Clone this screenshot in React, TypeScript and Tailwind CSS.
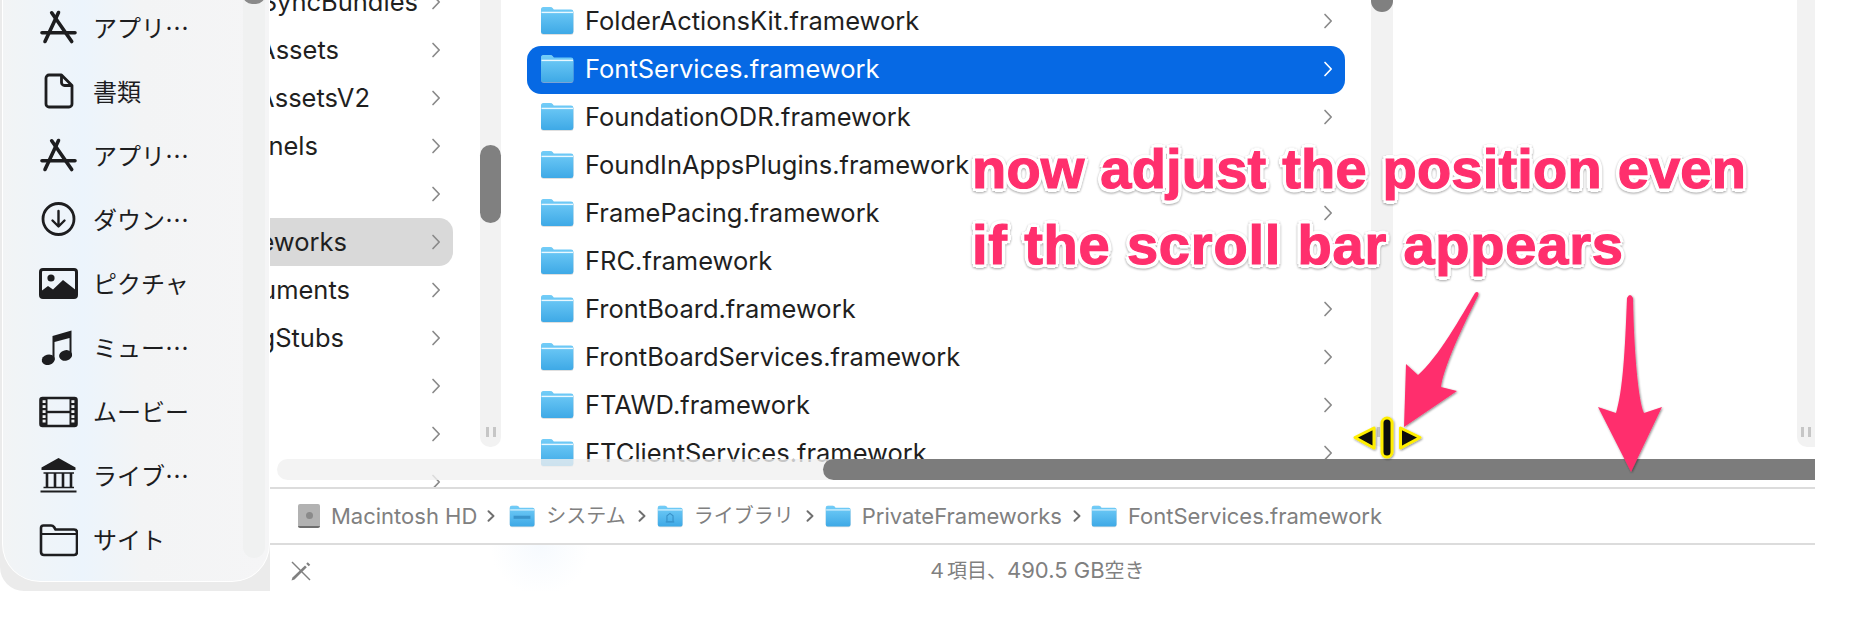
import React from "react";

const FONT = "font-[Inter,'Noto_Sans_CJK_JP',sans-serif]";

function Chevron({ className = "stroke-[#8a8a8a]" }: { className?: string }) {
  return (
    <svg width="10" height="16" viewBox="0 0 10 16" fill="none" className={`shrink-0 ${className}`}>
      <path d="M2 1.5 L8.2 8 L2 14.5" strokeWidth="1.7" strokeLinecap="round" strokeLinejoin="round" />
    </svg>
  );
}

function Folder({ size = 34, mark }: { size?: number; mark?: "macos" | "lib" }) {
  const h = Math.round((size * 30) / 34);
  return (
    <svg width={size} height={h} viewBox="0 0 34 30" className="shrink-0">
      <defs>
        <linearGradient id="fb" x1="0" y1="0" x2="0" y2="1">
          <stop offset="0" stopColor="#73cdf8" />
          <stop offset="1" stopColor="#3ea9e6" />
        </linearGradient>
      </defs>
      <path d="M1 26 V4 Q1 1 4 1 H10 Q12 1 13 2.5 L14 4 H31 Q33.5 4 33.5 7 V26 Q33.5 29 31 29 H4 Q1 29 1 26 Z" fill="#c9c9c9" opacity="0.6" />
      <path d="M1 25.5 V3.5 Q1 1 3.5 1 H10 Q12 1 12.8 2.3 L13.6 3.6 H31 Q33.4 3.6 33.4 6 V25.5 Q33.4 28 31 28 H3.5 Q1 28 1 25.5 Z" fill="url(#fb)" />
      <path d="M1.5 6.4 H33" stroke="#e9f8ff" strokeWidth="1.4" />
      {mark === "macos" && <rect x="6" y="14" width="22" height="4" fill="#2a7fb8" opacity="0.65" />}
      {mark === "lib" && <path d="M13 21 V14 L17 11 L21 14 V21 M11.5 22 H22.5" stroke="#2a7fb8" strokeWidth="1.4" fill="none" opacity="0.7" />}
    </svg>
  );
}

const ink = "#1d1d1f";

const icons: Record<string, React.ReactNode> = {
  app: (
    <g stroke={ink} strokeWidth="3.6" strokeLinecap="round" fill="none">
      <path d="M20.5 5.5 L7 34.5" />
      <path d="M13.7 5.8 L33.7 34.5" />
      <path d="M4 25.7 H37" />
    </g>
  ),
  doc: (
    <g stroke={ink} strokeWidth="2.8" fill="none" strokeLinejoin="round">
      <path d="M11 4 H23.5 L34 14.5 V33 a3 3 0 0 1 -3 3 H11 a3 3 0 0 1 -3 -3 V7 a3 3 0 0 1 3 -3 Z" />
      <path d="M23.5 4 V11.5 a3 3 0 0 0 3 3 H34" />
    </g>
  ),
  down: (
    <g stroke={ink} fill="none" strokeLinecap="round" strokeLinejoin="round">
      <circle cx="20.5" cy="20" r="15.5" strokeWidth="2.8" />
      <path d="M20.5 12 V27 M14.5 21.5 L20.5 27.5 L26.5 21.5" strokeWidth="2.4" />
    </g>
  ),
  pic: (
    <g>
      <rect x="2.5" y="6.5" width="36" height="28" rx="2.5" fill="none" stroke={ink} strokeWidth="3" />
      <circle cx="13" cy="15" r="3.6" fill={ink} />
      <path d="M2 34 V29 L10 23 L15 26.5 L25 17 L39 28 V34 Z" fill={ink} />
    </g>
  ),
  music: (
    <g fill={ink}>
      <ellipse cx="10.3" cy="32.7" rx="6.6" ry="5.2" transform="rotate(-15 10.3 32.7)" />
      <ellipse cx="27.6" cy="28.4" rx="6.6" ry="5.2" transform="rotate(-15 27.6 28.4)" />
      <path d="M14.5 33 V9 L33.5 3.5 V29 H31.5 V11 L16.5 15 V33 Z" />
    </g>
  ),
  film: (
    <g>
      <rect x="2.5" y="7" width="36" height="28" rx="2" fill="none" stroke={ink} strokeWidth="2.6" />
      <rect x="2.5" y="7" width="7" height="28" fill={ink} />
      <rect x="31.5" y="7" width="7" height="28" fill={ink} />
      <path d="M9 21 H32" stroke={ink} strokeWidth="2.4" />
      {[10.5, 15.5, 20.5, 25.5, 30].map((y) => (
        <g key={y} fill="#f2f4f6">
          <rect x="4.6" y={y - 1.3} width="3" height="2.8" />
          <rect x="33.4" y={y - 1.3} width="3" height="2.8" />
        </g>
      ))}
    </g>
  ),
  lib: (
    <g>
      <path d="M20.5 3 L37.5 12.5 V15 H3.5 V12.5 Z" fill={ink} />
      <path d="M9 18 V32 M17 18 V32 M25 18 V32 M33 18 V32" stroke={ink} strokeWidth="2.6" />
      <path d="M5.5 18 H36 M5.5 32.5 H36" stroke={ink} strokeWidth="1.4" />
      <path d="M2.5 36.5 H38.5" stroke={ink} strokeWidth="2" />
    </g>
  ),
  site: (
    <g stroke={ink} fill="none" strokeLinejoin="round">
      <path d="M3 33 V9 Q3 6.5 5.5 6.5 H13 Q15 6.5 16 8 L17.5 10.5 H36 Q39 10.5 39 13.5 V33 Q39 36 36 36 H6 Q3 36 3 33 Z" strokeWidth="2.6" />
      <path d="M3 15 H39" strokeWidth="1.8" />
    </g>
  ),
};

const sideRows: [string, string][] = [
  ["app", "アプリ…"],
  ["doc", "書類"],
  ["app", "アプリ…"],
  ["down", "ダウン…"],
  ["pic", "ピクチャ"],
  ["music", "ミュー…"],
  ["film", "ムービー"],
  ["lib", "ライブ…"],
  ["site", "サイト"],
];

const col1: { t: string; w: string; sel?: boolean }[] = [
  { t: "SyncBundles", w: "w-[13px]" },
  { t: "Assets", w: "w-[92px]" },
  { t: "AssetsV2", w: "w-[61px]" },
  { t: "Panels", w: "w-[113px]" },
  { t: "", w: "w-[48px]" },
  { t: "PrivateFrameworks", w: "w-[84px]", sel: true },
  { t: "Documents", w: "w-[81px]" },
  { t: "TracingStubs", w: "w-[87px]" },
  { t: "", w: "w-[48px]" },
  { t: "", w: "w-[48px]" },
  { t: "", w: "w-[48px]" },
];

const col2 = [
  "FolderActionsKit.framework",
  "FontServices.framework",
  "FoundationODR.framework",
  "FoundInAppsPlugins.framework",
  "FramePacing.framework",
  "FRC.framework",
  "FrontBoard.framework",
  "FrontBoardServices.framework",
  "FTAWD.framework",
  "FTClientServices.framework",
];

function Grip() {
  return (
    <div className="mt-auto mb-[10px] flex justify-center gap-[4px]">
      <div className="h-[10px] w-[3px] bg-[#c6c6c6]" />
      <div className="h-[10px] w-[3px] bg-[#c6c6c6]" />
    </div>
  );
}

function Crumb({ icon, text, latin }: { icon: React.ReactNode; text: string; latin?: boolean }) {
  return (
    <>
      {icon}
      <span className={`ml-[11px] whitespace-nowrap ${latin ? "text-[22px]" : "text-[20px]"}`}>{text}</span>
    </>
  );
}

function CrumbSep({ className }: { className: string }) {
  return (
    <svg width="8" height="12" viewBox="0 0 8 12" fill="none" className={`shrink-0 ${className}`}>
      <path d="M1.5 1.2 L6.5 6 L1.5 10.8" stroke="#6f6f6f" strokeWidth="1.9" strokeLinecap="round" strokeLinejoin="round" />
    </svg>
  );
}

export default function App() {
  return (
    <div className={`relative flex h-[632px] w-[1856px] overflow-hidden bg-white ${FONT}`}>
      {/* floating sidebar */}
      <aside className="h-[591px] w-[270px] shrink-0 rounded-bl-[24px] bg-[#ebebeb]">
        <div className="ml-[2px] flex h-[582px] w-[268px] overflow-hidden rounded-b-[38px] border-x border-b border-white bg-[linear-gradient(90deg,#f2f4f5_0%,#ecf4fc_30%,#f3f4f5_52%,#f5f5f6_100%)]">
          <div className="-mt-[5px] w-[240px] shrink-0">
            {sideRows.map(([ic, label], i) => (
              <div key={i} className="flex h-[64px] items-center gap-[15px] pl-[35px] font-['Noto_Sans_CJK_JP',sans-serif] text-[24px] text-[#1d1d1f]">
                <svg width="40" height="40" viewBox="0 0 40 40" className="shrink-0">
                  {icons[ic]}
                </svg>
                <span className="whitespace-nowrap">{label}</span>
              </div>
            ))}
          </div>
          <div className="h-[558px] w-[22px] shrink-0 rounded-b-[11px] bg-[#f0f1f1]">
            <div className="-mt-[14px] h-[18px] w-full rounded-full bg-[#8a8a8a]" />
          </div>
        </div>
      </aside>

      {/* finder window */}
      <main className="w-[1545px] shrink-0">
        <div className="relative flex h-[487px] overflow-hidden text-[25.5px] text-[#1f1f1f]">
          {/* column 1 */}
          <div className="-mt-[22px] w-[210px] shrink-0 pr-[27px]">
            {col1.map((r, i) => (
              <div
                key={i}
                className={`flex h-[48px] items-center justify-end rounded-r-[14px] pr-[12px] ${r.sel ? "bg-[#d9d9d9]" : ""}`}
              >
                <div className="flex min-w-0 flex-1 justify-end overflow-hidden whitespace-nowrap">
                  <span className="shrink-0">{r.t}</span>
                </div>
                <div className={`${r.w} shrink-0`} />
                <Chevron />
              </div>
            ))}
          </div>
          <div className="flex h-[447px] w-[21px] shrink-0 flex-col rounded-b-[10px] bg-[#f2f2f2]">
            <div className="mt-[145px] h-[78px] w-full rounded-full bg-[#808080]" />
            <Grip />
          </div>

          {/* column 2 */}
          <div className="-mt-[2px] w-[870px] shrink-0 px-[26px]">
            {col2.map((name) => {
              const sel = name.startsWith("FontServices");
              return (
                <div
                  key={name}
                  className={`flex h-[48px] items-center rounded-[14px] pb-[2px] pl-[13px] pr-[12px] ${sel ? "bg-[#0669e4] text-white" : ""}`}
                >
                  <Folder />
                  <span className="ml-[11px] whitespace-nowrap">{name}</span>
                  <div className="flex-1" />
                  <Chevron className={sel ? "stroke-white" : "stroke-[#8a8a8a]"} />
                </div>
              );
            })}
          </div>
          <div className="flex h-[447px] w-[22px] shrink-0 flex-col rounded-b-[10px] bg-[#f2f2f2]">
            <div className="h-[12px] w-full rounded-b-full bg-[#808080]" />
            <Grip />
          </div>

          {/* column 3 */}
          <div className="w-[404px] shrink-0" />
          <div className="flex h-[447px] w-[18px] shrink-0 flex-col rounded-bl-[10px] bg-[#f2f2f2]">
            <Grip />
          </div>

          {/* horizontal scroller, over the columns */}
          <div className="absolute left-[7px] right-0 top-[459px] flex h-[21px] justify-end rounded-full bg-[#f0f0f0]/80">
            <div className="h-full w-[992px] rounded-l-full rounded-r-[8px] bg-[#7c7c7c]" />
          </div>
        </div>

        {/* path bar */}
        <div className="flex h-[58px] items-center border-y-2 border-[#dcdcdc] pl-[28px] text-[#808080]">
          <Crumb
            icon={
              <div className="flex h-[24px] w-[22px] shrink-0 items-center justify-center rounded-[2px] border-b-2 border-[#6e6e6e] bg-[#b2b2b2]">
                <div className="h-[7px] w-[7px] rounded-full bg-[#8a8a8a]" />
              </div>
            }
            text="Macintosh HD"
            latin
          />
          <CrumbSep className="ml-[10px] mr-[14px]" />
          <Crumb icon={<Folder size={26} mark="macos" />} text="システム" />
          <CrumbSep className="ml-[12px] mr-[11px]" />
          <Crumb icon={<Folder size={26} mark="lib" />} text="ライブラリ" />
          <CrumbSep className="ml-[12px] mr-[11px]" />
          <Crumb icon={<Folder size={26} />} text="PrivateFrameworks" latin />
          <CrumbSep className="ml-[11px] mr-[10px]" />
          <Crumb icon={<Folder size={26} />} text="FontServices.framework" latin />
        </div>

        {/* status bar */}
        <div className="flex h-[46px] items-center bg-[radial-gradient(circle_at_270px_0px,#f6fafe_0px,#ffffff_50px)] pl-[20px] pt-[5px] text-[20px] text-[#808080]">
          <svg width="22" height="22" viewBox="0 0 22 22" fill="none" className="shrink-0">
            <path d="M2 2 L20 20" stroke="#808080" strokeWidth="1.5" />
            <path d="M1.5 20.5 L2.5 17.5 L15 5.5 L16.8 7.3 L4.5 19.5 Z" fill="#808080" />
            <path d="M17 3 L19.5 5.5" stroke="#808080" strokeWidth="2.2" />
          </svg>
          <span className="ml-[615px] whitespace-nowrap">
            ４項目、<span className="text-[22px]">490.5 GB</span>
            空き
          </span>
        </div>
      </main>

      {/* annotation over the screenshot */}
      <div className="absolute left-[972px] top-[131px] whitespace-nowrap font-['Liberation_Sans',sans-serif] text-[56px] font-bold leading-[76px] text-[#ff2f6d] [-webkit-text-stroke:1.2px_#ff2f6d] [text-shadow:4px_0_0_#fff,-4px_0_0_#fff,0_4px_0_#fff,0_-4px_0_#fff,3px_3px_0_#fff,-3px_3px_0_#fff,3px_-3px_0_#fff,-3px_-3px_0_#fff] drop-shadow-[0_1px_1px_rgba(0,0,0,0.35)]">
        <div className="tracking-[0.2px]">now adjust the position even</div>
        <div className="tracking-[0.8px]">if the scroll bar appears</div>
      </div>

      <svg width="1856" height="632" viewBox="0 0 1856 632" className="pointer-events-none absolute left-0 top-0">
        <defs>
          <filter id="sh" x="-20%" y="-20%" width="140%" height="140%">
            <feDropShadow dx="0.8" dy="1" stdDeviation="0.8" floodColor="#000" floodOpacity="0.45" />
          </filter>
        </defs>
        <g fill="#ff2f6d" filter="url(#sh)">
          <path d="M1475 293 Q1477 291 1478.5 293 Q1478.5 295 1478 296 C1465 322 1444 365 1441 387 L1457 391 L1404 427 L1406 364 L1418 375 C1438 358 1462 315 1475 293 Z" />
          <path d="M1627 298 Q1630 292 1633 298 C1634 350 1638 400 1644 413 L1662 407 L1631 472 L1598 407 L1616 413 C1623 390 1625 350 1627 298 Z" />
        </g>
        <g stroke="#ffee00" strokeWidth="3" strokeLinejoin="round" fill="#0a0a0a" filter="url(#sh)">
          <path d="M1355 437.5 L1374 428 V448 Z" />
          <path d="M1420 437.5 L1400.5 428 V448 Z" />
          <rect x="1382" y="418" width="10" height="39" rx="5" />
        </g>
      </svg>
    </div>
  );
}
